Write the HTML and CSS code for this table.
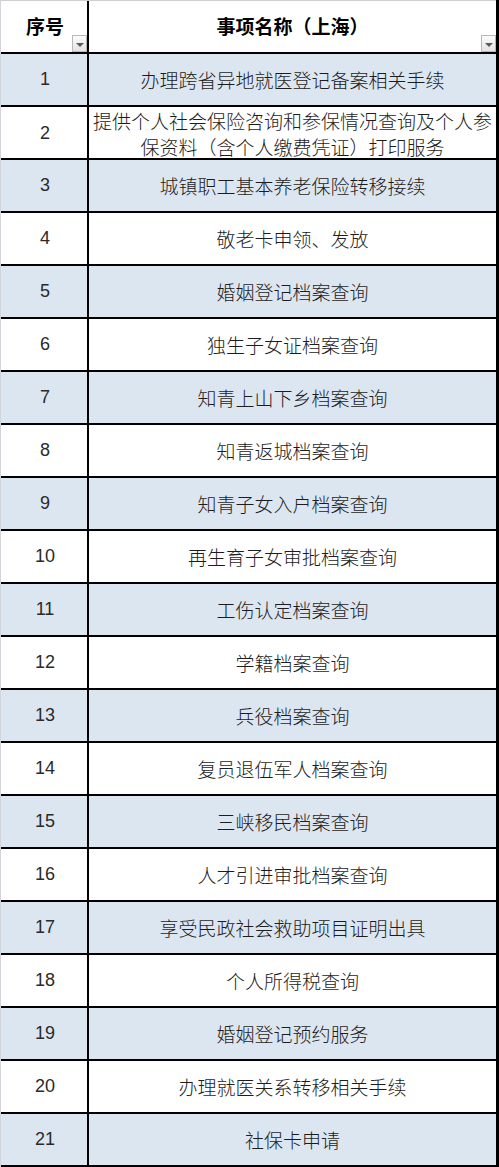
FILE: index.html
```html
<!DOCTYPE html>
<html lang="zh-CN">
<head>
<meta charset="utf-8">
<title>事项名称（上海）</title>
<link rel="stylesheet" href="styles.css">
</head>
<body>
<div class="sheet">
  <div class="row head">
    <div class="cell num">序号<span class="filter"></span></div>
    <div class="cell name">事项名称（上海）<span class="filter"></span></div>
  </div>
  <div class="row odd"><div class="cell num">1</div><div class="cell name">办理跨省异地就医登记备案相关手续</div></div>
  <div class="row"><div class="cell num">2</div><div class="cell name two">提供个人社会保险咨询和参保情况查询及个人参保资料（含个人缴费凭证）打印服务</div></div>
  <div class="row odd"><div class="cell num">3</div><div class="cell name">城镇职工基本养老保险转移接续</div></div>
  <div class="row"><div class="cell num">4</div><div class="cell name">敬老卡申领、发放</div></div>
  <div class="row odd"><div class="cell num">5</div><div class="cell name">婚姻登记档案查询</div></div>
  <div class="row"><div class="cell num">6</div><div class="cell name">独生子女证档案查询</div></div>
  <div class="row odd"><div class="cell num">7</div><div class="cell name">知青上山下乡档案查询</div></div>
  <div class="row"><div class="cell num">8</div><div class="cell name">知青返城档案查询</div></div>
  <div class="row odd"><div class="cell num">9</div><div class="cell name">知青子女入户档案查询</div></div>
  <div class="row"><div class="cell num">10</div><div class="cell name">再生育子女审批档案查询</div></div>
  <div class="row odd"><div class="cell num">11</div><div class="cell name">工伤认定档案查询</div></div>
  <div class="row"><div class="cell num">12</div><div class="cell name">学籍档案查询</div></div>
  <div class="row odd"><div class="cell num">13</div><div class="cell name">兵役档案查询</div></div>
  <div class="row"><div class="cell num">14</div><div class="cell name">复员退伍军人档案查询</div></div>
  <div class="row odd"><div class="cell num">15</div><div class="cell name">三峡移民档案查询</div></div>
  <div class="row"><div class="cell num">16</div><div class="cell name">人才引进审批档案查询</div></div>
  <div class="row odd"><div class="cell num">17</div><div class="cell name">享受民政社会救助项目证明出具</div></div>
  <div class="row"><div class="cell num">18</div><div class="cell name">个人所得税查询</div></div>
  <div class="row odd"><div class="cell num">19</div><div class="cell name">婚姻登记预约服务</div></div>
  <div class="row"><div class="cell num">20</div><div class="cell name">办理就医关系转移相关手续</div></div>
  <div class="row odd"><div class="cell num">21</div><div class="cell name">社保卡申请</div></div>
</div>
</body>
</html>
```

FILE: styles.css
```css
html, body {
  margin: 0;
  padding: 0;
  background: #ffffff;
}

.sheet {
  width: 499px;
  box-sizing: border-box;
  border-left: 1px solid #d2d6db;
  border-right: 3px solid #000;
  font-family: "Noto Sans CJK SC", "Noto Sans", sans-serif;
  color: #1c1c1c;
}

.row {
  display: grid;
  grid-template-columns: 88px 1fr;
  height: 53px;
  box-sizing: border-box;
  border-bottom: 2px solid #000;
  background: #ffffff;
}

.row.odd {
  background: #dce6f1;
}

.row.head {
  height: 54px;
  border-top: 1px solid #cfcfcf;
  background: #ffffff;
}

.cell {
  position: relative;
  display: flex;
  align-items: center;
  justify-content: center;
  text-align: center;
}

.cell.num {
  border-right: 2px solid #000;
  font-family: "Liberation Sans", "DejaVu Sans", sans-serif;
  font-size: 18px;
  color: #2a2a2a;
  padding-left: 2px;
}

.cell.name {
  font-size: 19px;
  font-weight: 300;
  line-height: 26px;
  padding: 0 2px;
}

.cell.name.two {
  padding-top: 1px;
}

.head .cell {
  font-family: "Noto Sans CJK SC", sans-serif;
  font-weight: 700;
  font-size: 19px;
  color: #000;
  padding-bottom: 2px;
}

.filter {
  position: absolute;
  right: 0;
  bottom: 0;
  width: 15px;
  height: 17px;
  box-sizing: border-box;
  border: 1px solid #b9b9b9;
  background: linear-gradient(#fbfbfb, #e4e4e4);
}

.filter::after {
  content: "";
  position: absolute;
  left: 3px;
  top: 7px;
  border-left: 4px solid transparent;
  border-right: 4px solid transparent;
  border-top: 4px solid #5a5a5a;
}
```
